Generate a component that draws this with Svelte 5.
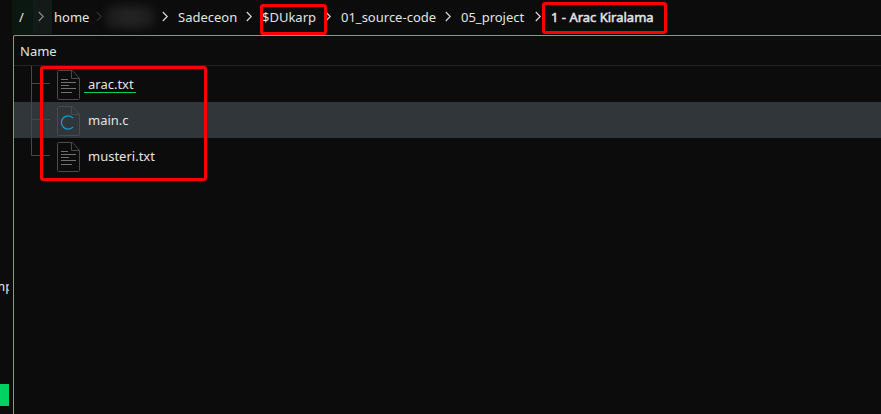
<script>
  const crumbs = [
    { name: '/', width: 40, kind: 'root' },
    { name: 'home', width: 58 },
    { name: '', width: 66, kind: 'hidden' },
    { name: 'Sadeceon', width: 84 },
    { name: '$DUkarp', width: 79, marked: true },
    { name: '01_source-code', width: 120 },
    { name: '05_project', width: 90 },
    { name: '1 - Arac Kiralama', width: 130, kind: 'current', marked: true }
  ];
  const files = [
    { name: 'arac.txt', type: 'text', underlined: true },
    { name: 'main.c', type: 'c', active: true },
    { name: 'musteri.txt', type: 'text' }
  ];
</script>

<div class="window">
  <aside>
    <span class="place">mp</span>
    <div class="usage"></div>
  </aside>
  <main>
    <nav>
      {#each crumbs as crumb}
        <div class="crumb {crumb.kind ?? ''}" style="width: {crumb.width}px">
          {#if crumb.kind === 'hidden'}
            <i class="smudge"></i>
          {:else}
            <span class="label">{crumb.name}</span>
          {/if}
          {#if crumb.kind !== 'current'}
            <svg class="chevron" class:dim={crumb.kind === 'root'} class:faint={crumb.name === 'home'} width="6" height="11" viewBox="0 0 6 11"><path d="M.8 1 5.2 5.5 .8 10" /></svg>
          {/if}
          {#if crumb.marked}<b class="mark"></b>{/if}
        </div>
      {/each}
    </nav>
    <section>
      <header>Name</header>
      <div class="files">
        {#each files as file, i}
          <div class="row" class:active={file.active}>
            <svg class="branch" width="38" height="36" viewBox="0 0 38 36">
              <path d={i === files.length - 1 ? 'M17.5 0V17.5H36' : 'M17.5 0V36M17.5 17.5H36'} />
            </svg>
            <svg class="icon" width="24" height="30" viewBox="0 0 24 30">
              <path d="M1.5.5H15.5L22.5 8.5V28.5Q22.5 29.5 21.5 29.5H1.5Q.5 29.5.5 28.5V1.5Q.5.5 1.5.5ZM14.5.5V8.5H22.5" />
              {#if file.type === 'c'}
                <path class="letter" d="M16 12.2A6.6 6.6 0 1 0 16 20.8" />
              {:else}
                <path class="lines" d="M4 9.5H11M4 12.5H19M4 15.5H12M4 18.5H19M4 22.5H15" />
              {/if}
            </svg>
            <span class="file" class:underlined={file.underlined}>{file.name}</span>
          </div>
        {/each}
        <b class="mark"></b>
      </div>
    </section>
  </main>
</div>

<style>
  :global(body) { margin: 0; background: #0c0c0c; }
  .window {
    display: flex;
    width: 881px;
    height: 414px;
    overflow: hidden;
    background: #0c0c0c;
    color: #e2e3e4;
    font: 13px/18px "Noto Sans", sans-serif;
  }
  aside {
    display: flex;
    flex-direction: column;
    justify-content: flex-end;
    width: 9px;
    margin-right: 3px;
    overflow: hidden;
  }
  .place { margin: 0 0 89px -7px; }
  .usage { height: 22px; margin-bottom: 8px; background: #00d163; }
  main { flex: 1; min-width: 0; display: flex; flex-direction: column; }
  nav { display: flex; height: 35px; }
  .crumb {
    position: relative;
    display: flex;
    flex: none;
    box-sizing: border-box;
    height: 34px;
    align-items: center;
    justify-content: space-between;
    padding: 0 8px 0 2px;
    white-space: nowrap;
  }
  .chevron { flex: none; margin-top: -1px; overflow: visible; }
  .chevron path { fill: none; stroke: #d5d6d6; stroke-width: 1.2; }
  .dim path { stroke: #858886; }
  .faint path { stroke: #303030; }
  .root {
    padding-left: 7px;
    background: linear-gradient(90deg, #0b1811 21px, #131a18 21px);
  }
  .hidden { padding-left: 0; }
  .current { -webkit-text-stroke: 0.5px #e2e3e4; }
  .smudge {
    width: 50px;
    height: 26px;
    margin-left: -5px;
    border-radius: 8px;
    background: radial-gradient(#262626, #1c1c1c 55%, #101010);
    filter: blur(3px);
  }
  .hidden .chevron { margin-left: auto; }
  .mark {
    position: absolute;
    box-sizing: border-box;
    border: 3px solid #fe0000;
    border-radius: 3px;
    pointer-events: none;
  }
  .crumb .mark { left: 0; top: 4px; width: 67px; height: 31px; }
  .current .mark { left: -7px; top: 2px; width: 125px; height: 32px; }
  section {
    flex: 1;
    margin-left: 1px;
    border-top: 1px solid #2fc784;
    border-left: 1px solid #2fc784;
    border-top-left-radius: 2px;
  }
  header {
    box-sizing: border-box;
    height: 30px;
    padding: 6px 6px 0;
    border-bottom: 1px solid #232323;
  }
  .files { position: relative; }
  .files .mark { left: 26px; top: 0; width: 167px; height: 115px; }
  .row { display: flex; height: 36px; align-items: center; }
  .active { background: #31363a; }
  .branch { flex: none; }
  .branch path { fill: none; stroke: #474849; }
  .icon { margin: 2px 3px 0 5px; }
  .icon path { fill: none; stroke: #4a4b4c; }
  .icon .lines { stroke: #707172; }
  .icon .letter { stroke: #159bd3; stroke-width: 1.3; }
  .file { padding: 0 3px 0 4px; }
  .row .underlined { padding-right: 2px; box-shadow: inset 0 -1px #00d163; }
</style>
